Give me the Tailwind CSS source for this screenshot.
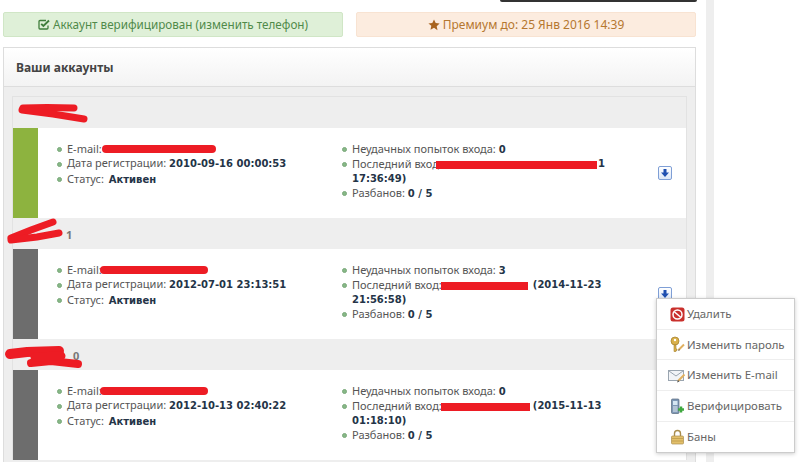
<!DOCTYPE html>
<html lang="ru">

<head>
    <meta charset="UTF-8">
    <meta name="viewport" content="width=device-width, initial-scale=1.0">
    <title>Аккаунты</title>
    <script src="https://cdn.jsdelivr.net/npm/@tailwindcss/browser@4"></script>
</head>

<body class="bg-white h-[462px] w-[810px] overflow-hidden font-['Noto_Sans',sans-serif] text-[11px] text-[#555]">
    <div class="relative flex h-[462px] w-[810px]">
        <!-- основная колонка -->
        <div class="w-[706px] h-[462px] pl-[3px] pr-[10px] flex flex-col overflow-hidden relative">
            <div class="absolute right-[9px] top-0 w-[197px] h-[2px] bg-[#333] rounded-b-sm"></div>

            <!-- уведомления -->
            <div class="flex gap-[13px] pt-[12px]">
                <div class="w-[340px] h-[25px] rounded-[2px] bg-[#dff0d8] border border-[#d0e6c6] text-[#4f8a4a] text-[11.7px] flex items-center justify-center gap-[3px]">
                    <svg class="w-[12px] h-[11px]" viewBox="0 0 12 11" fill="none" stroke="#3f7d3b" stroke-width="1.300"><path d="M10 6.500v2.500a1 1 0 0 1-1 1H2a1 1 0 0 1-1-1V2.500a1 1 0 0 1 1-1h6"/><path d="M3.200 4.800 5.400 7 11 1.500" stroke-width="1.900"/></svg>
                    <span>Аккаунт верифицирован (изменить телефон)</span>
                </div>
                <div class="w-[340px] h-[25px] rounded-[2px] bg-[#fcecdf] border border-[#f8e3d2] text-[#b5772f] text-[12px] flex items-center justify-center gap-[3px]">
                    <svg class="w-[12px] h-[12px]" viewBox="0 0 12 12" fill="#a9641f"><path d="M6 .5l1.700 3.600 3.900.5-2.900 2.700.8 3.900L6 8.800l-3.500 1.900.8-3.900L.4 4.600l3.900-.5z"/></svg>
                    <span>Премиум до: 25 Янв 2016 14:39</span>
                </div>
            </div>

            <!-- панель -->
            <div class="mt-[10px] flex-1 border-x border-[#ddd] bg-[#eee] flex flex-col">
                <div class="h-[40px] shrink-0 border-y border-[#ddd] bg-gradient-to-b from-white to-[#f3f3f3] flex items-center pl-[12px] pt-[1px] font-bold text-[12px] text-[#444]">Ваши аккаунты</div>
                <div class="pt-[9px] px-[8px]">
                    <div class="border border-[#e2e2e2] border-b-0">

                        <!-- аккаунт 1 -->
                        <div class="relative h-[31px] bg-[#eee]">
                            <svg class="absolute left-[6px] top-[7px] overflow-visible" width="70" height="20" fill="none" stroke="#ed1c24" stroke-linecap="round"><path d="M4 4 L28 3.500 L55 4" stroke-width="7"/><path d="M3 6 L34 10 L65 15" stroke-width="7"/></svg>
                        </div>
                        <div class="flex h-[90px] bg-white">
                            <div class="w-[25px] bg-[#8db33f]"></div>
                            <div class="flex-1 flex pl-[19px] pt-[14px] leading-[14.4px]">
                                <ul class="w-[285px]">
                                    <li class="flex items-center gap-[5px]"><span class="w-[5px] h-[5px] rounded-full bg-[#86b886] border border-[#7aa87a]"></span>E-mail:<span class="w-[114px] h-[8px] rounded-full bg-[#ed1c24] ml-[-5px]"></span></li>
                                    <li class="flex items-center gap-[5px]"><span class="w-[5px] h-[5px] rounded-full bg-[#86b886] border border-[#7aa87a]"></span><span>Дата регистрации: <b class="text-[10px] text-[#243447] font-['DejaVu_Sans']">2010-09-16 00:00:53</b></span></li>
                                    <li class="flex items-center gap-[5px]"><span class="w-[5px] h-[5px] rounded-full bg-[#86b886] border border-[#7aa87a]"></span><span>Статус: <b class="text-[10px] text-[#243447] font-['DejaVu_Sans'] ml-[2px]">Активен</b></span></li>
                                </ul>
                                <ul class="w-[316px]">
                                    <li class="flex items-center gap-[5px]"><span class="w-[5px] h-[5px] rounded-full bg-[#86b886] border border-[#7aa87a]"></span><span>Неудачных попыток входа: <b class="text-[10px] text-[#243447] font-['DejaVu_Sans']">0</b></span></li>
                                    <li class="flex items-center gap-[5px]"><span class="w-[5px] h-[5px] rounded-full bg-[#86b886] border border-[#7aa87a]"></span>Последний вход<span class="w-[161px] h-[8px] bg-[#ed1c24] ml-[-8px]"></span><b class="text-[10px] text-[#243447] font-['DejaVu_Sans'] ml-[-4px]">1</b></li>
                                    <li class="pl-[10px] text-[10px] font-bold text-[#243447] font-['DejaVu_Sans']">17:36:49)</li>
                                    <li class="flex items-center gap-[5px]"><span class="w-[5px] h-[5px] rounded-full bg-[#86b886] border border-[#7aa87a]"></span><span>Разбанов: <b class="text-[10px] text-[#243447] font-['DejaVu_Sans']">0 / 5</b></span></li>
                                </ul>
                                <div class="pt-[24px]">
                                    <span class="flex w-[14px] h-[14px] items-center justify-center rounded-[2px] border border-[#7f9fd6] bg-gradient-to-b from-white to-[#dbe6f7]">
                                        <svg width="10" height="10" viewBox="0 0 10 10" fill="#1f4fb0"><path d="M3.500 1h3v3.500H9L5 9 1 4.500h2.500z"/></svg>
                                    </span>
                                </div>
                            </div>
                        </div>

                        <!-- аккаунт 2 -->
                        <div class="relative h-[31px] bg-[#eee]">
                            <span class="absolute left-[53px] top-[9px] font-bold text-[#777]">1</span>
                            <svg class="absolute left-[-4px] top-[3px] overflow-visible" width="60" height="24" fill="none" stroke="#ed1c24" stroke-linecap="round"><path d="M2 17 L22 9 L44 1" stroke-width="7"/><path d="M2 19 L28 16 L50 12" stroke-width="7"/></svg>
                        </div>
                        <div class="flex h-[90px] bg-white">
                            <div class="w-[25px] bg-[#6d6d6d]"></div>
                            <div class="flex-1 flex pl-[19px] pt-[14px] leading-[14.4px]">
                                <ul class="w-[285px]">
                                    <li class="flex items-center gap-[5px]"><span class="w-[5px] h-[5px] rounded-full bg-[#86b886] border border-[#7aa87a]"></span>E-mail:<span class="w-[108px] h-[8px] rounded-full bg-[#ed1c24] ml-[-7px]"></span></li>
                                    <li class="flex items-center gap-[5px]"><span class="w-[5px] h-[5px] rounded-full bg-[#86b886] border border-[#7aa87a]"></span><span>Дата регистрации: <b class="text-[10px] text-[#243447] font-['DejaVu_Sans']">2012-07-01 23:13:51</b></span></li>
                                    <li class="flex items-center gap-[5px]"><span class="w-[5px] h-[5px] rounded-full bg-[#86b886] border border-[#7aa87a]"></span><span>Статус: <b class="text-[10px] text-[#243447] font-['DejaVu_Sans'] ml-[2px]">Активен</b></span></li>
                                </ul>
                                <ul class="w-[316px]">
                                    <li class="flex items-center gap-[5px]"><span class="w-[5px] h-[5px] rounded-full bg-[#86b886] border border-[#7aa87a]"></span><span>Неудачных попыток входа: <b class="text-[10px] text-[#243447] font-['DejaVu_Sans']">3</b></span></li>
                                    <li class="flex items-center gap-[5px]"><span class="w-[5px] h-[5px] rounded-full bg-[#86b886] border border-[#7aa87a]"></span>Последний вход:<span class="w-[87px] h-[8px] bg-[#ed1c24] ml-[-6px]"></span><b class="text-[10px] text-[#243447] font-['DejaVu_Sans']">(2014-11-23</b></li>
                                    <li class="pl-[10px] text-[10px] font-bold text-[#243447] font-['DejaVu_Sans']">21:56:58)</li>
                                    <li class="flex items-center gap-[5px]"><span class="w-[5px] h-[5px] rounded-full bg-[#86b886] border border-[#7aa87a]"></span><span>Разбанов: <b class="text-[10px] text-[#243447] font-['DejaVu_Sans']">0 / 5</b></span></li>
                                </ul>
                                <div class="pt-[24px]">
                                    <span class="flex w-[14px] h-[14px] items-center justify-center rounded-[2px] border border-[#7f9fd6] bg-gradient-to-b from-white to-[#dbe6f7]">
                                        <svg width="10" height="10" viewBox="0 0 10 10" fill="#1f4fb0"><path d="M3.500 1h3v3.500H9L5 9 1 4.500h2.500z"/></svg>
                                    </span>
                                </div>
                            </div>
                        </div>

                        <!-- аккаунт 3 -->
                        <div class="relative h-[31px] bg-[#eee]">
                            <span class="absolute left-[60px] top-[9px] font-bold text-[#777]">0</span>
                            <svg class="absolute left-[-6px] top-[3px] overflow-visible" width="75" height="28" fill="none" stroke="#ed1c24" stroke-linecap="round"><path d="M3 12 L20 10 L52 9" stroke-width="10"/><path d="M24 21 L44 19 L71 22" stroke-width="8"/><path d="M28 15 L54 14" stroke-width="9"/></svg>
                        </div>
                        <div class="flex h-[90px] bg-white">
                            <div class="w-[25px] bg-[#6d6d6d]"></div>
                            <div class="flex-1 flex pl-[19px] pt-[14px] leading-[14.4px]">
                                <ul class="w-[285px]">
                                    <li class="flex items-center gap-[5px]"><span class="w-[5px] h-[5px] rounded-full bg-[#86b886] border border-[#7aa87a]"></span>E-mail:<span class="w-[108px] h-[8px] rounded-full bg-[#ed1c24] ml-[-7px]"></span></li>
                                    <li class="flex items-center gap-[5px]"><span class="w-[5px] h-[5px] rounded-full bg-[#86b886] border border-[#7aa87a]"></span><span>Дата регистрации: <b class="text-[10px] text-[#243447] font-['DejaVu_Sans']">2012-10-13 02:40:22</b></span></li>
                                    <li class="flex items-center gap-[5px]"><span class="w-[5px] h-[5px] rounded-full bg-[#86b886] border border-[#7aa87a]"></span><span>Статус: <b class="text-[10px] text-[#243447] font-['DejaVu_Sans'] ml-[2px]">Активен</b></span></li>
                                </ul>
                                <ul class="w-[316px]">
                                    <li class="flex items-center gap-[5px]"><span class="w-[5px] h-[5px] rounded-full bg-[#86b886] border border-[#7aa87a]"></span><span>Неудачных попыток входа: <b class="text-[10px] text-[#243447] font-['DejaVu_Sans']">0</b></span></li>
                                    <li class="flex items-center gap-[5px]"><span class="w-[5px] h-[5px] rounded-full bg-[#86b886] border border-[#7aa87a]"></span>Последний вход:<span class="w-[89px] h-[8px] bg-[#ed1c24] ml-[-6px]"></span><b class="text-[10px] text-[#243447] font-['DejaVu_Sans'] ml-[-2px]">(2015-11-13</b></li>
                                    <li class="pl-[10px] text-[10px] font-bold text-[#243447] font-['DejaVu_Sans']">01:18:10)</li>
                                    <li class="flex items-center gap-[5px]"><span class="w-[5px] h-[5px] rounded-full bg-[#86b886] border border-[#7aa87a]"></span><span>Разбанов: <b class="text-[10px] text-[#243447] font-['DejaVu_Sans']">0 / 5</b></span></li>
                                </ul>
                            </div>
                        </div>
                    </div>
                </div>
            </div>
        </div>

        <!-- полоса справа -->
        <div class="w-[8px] h-[462px] bg-[#eee]"></div>

        <!-- выпадающее меню -->
        <div class="absolute left-[656px] top-[298px] w-[139px] bg-white border border-[#ccc] shadow-[0_1px_4px_rgba(0,0,0,0.2)] text-[11.400px] text-[#666]">
            <div class="h-[31px] flex items-center pl-[10px] border-b border-[#eee]">
                <span class="w-[20px] flex justify-center"><svg width="15" height="15" viewBox="0 0 15 15"><rect x=".5" y=".5" width="14" height="14" rx="2.500" fill="#c9302c"/><circle cx="7.500" cy="7.500" r="4.500" fill="none" stroke="#fff" stroke-width="1.500"/><path d="M4.300 4.700l6.400 5.600" stroke="#fff" stroke-width="1.500"/></svg></span>
                <span>Удалить</span>
            </div>
            <div class="h-[30px] flex items-center pl-[10px] border-b border-[#eee]">
                <span class="w-[20px] flex justify-center"><svg width="17" height="17" viewBox="0 0 17 17"><circle cx="6" cy="5" r="4" fill="#d9b04a" stroke="#a88430" stroke-width=".8"/><circle cx="6" cy="4" r="1.200" fill="#fff"/><path d="M5 9v6.500h2v-1h1v-1.500h-1V9z" fill="#d9b04a" stroke="#a88430" stroke-width=".6"/><path d="M9.500 14 15 8.500" stroke="#e0b060" stroke-width="2"/><path d="M9 15l1-2 1 1z" fill="#555"/></svg></span>
                <span>Изменить пароль</span>
            </div>
            <div class="h-[31px] flex items-center pl-[10px] border-b border-[#eee]">
                <span class="w-[20px] flex justify-center"><svg width="18" height="16" viewBox="0 0 18 16"><rect x=".5" y="3.500" width="15" height="10" fill="#f2f4f7" stroke="#9aa5b0"/><path d="M1 4l7 5 7-5" fill="none" stroke="#9aa5b0"/><path d="M10 14 16.500 7.500" stroke="#e0b060" stroke-width="2"/><path d="M9 15.500l1-2.500 1.500 1.500z" fill="#555"/></svg></span>
                <span>Изменить E-mail</span>
            </div>
            <div class="h-[31px] flex items-center pl-[10px] border-b border-[#eee]">
                <span class="w-[20px] flex justify-center"><svg width="15" height="17" viewBox="0 0 15 17"><rect x="1.500" y="1" width="7.500" height="14.500" rx="1" fill="#7d97b5" stroke="#56687d" stroke-width=".7"/><rect x="3" y="3" width="4.500" height="4" fill="#d5e6f2"/><path d="M3 9h4.500M3 11h4.500M3 13h4.500" stroke="#e6edf3"/><path d="M11 8.500v6M8 11.500h6" stroke="#3fa83f" stroke-width="2.500"/></svg></span>
                <span>Верифицировать</span>
            </div>
            <div class="h-[30px] flex items-center pl-[10px]">
                <span class="w-[20px] flex justify-center"><svg width="15" height="16" viewBox="0 0 15 16"><path d="M4.500 7V4.500a3 3 0 0 1 6 0V7" fill="none" stroke="#a98d4d" stroke-width="1.400"/><rect x="1.500" y="7" width="12" height="8" rx="1" fill="#e3c06b" stroke="#a98d4d" stroke-width=".7"/><path d="M2 9.500h11M2 12h11" stroke="#bd9a4a" stroke-width=".8"/></svg></span>
                <span>Баны</span>
            </div>
        </div>
    </div>
</body>

</html>
